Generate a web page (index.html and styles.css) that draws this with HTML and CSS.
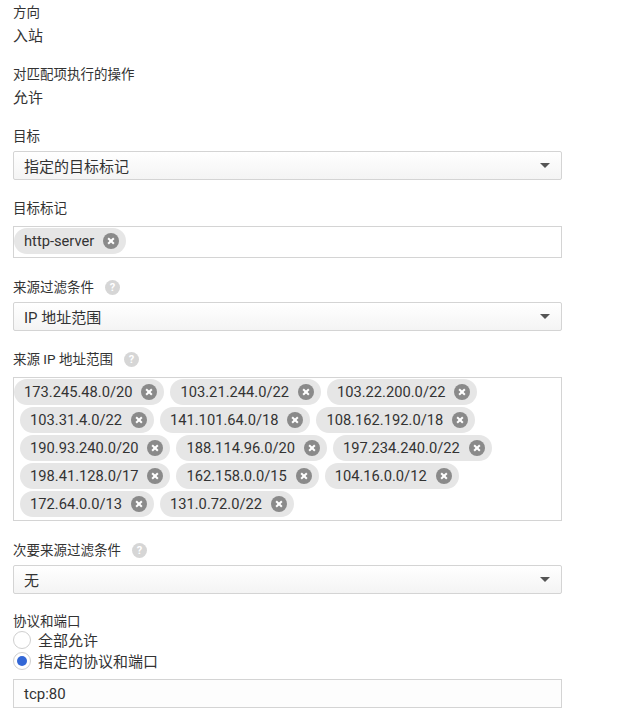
FILE: index.html
```html
<!DOCTYPE html>
<html lang="zh-CN">
<head>
    <meta charset="UTF-8">
    <title>防火墙规则</title>
    <link rel="stylesheet" href="styles.css">
</head>
<body>
    <div class="form">
        <div class="field">
            <div class="label">方向</div>
            <div class="value">入站</div>
        </div>

        <div class="field">
            <div class="label">对匹配项执行的操作</div>
            <div class="value">允许</div>
        </div>

        <div class="field select-field">
            <div class="label">目标</div>
            <div class="select">
                <span>指定的目标标记</span>
                <span class="arrow"></span>
            </div>
        </div>

        <div class="field tags-field">
            <div class="label">目标标记</div>
            <div class="chip-box">
                <span class="chip">http-server<i class="chip-x"></i></span>
            </div>
        </div>

        <div class="field select-field">
            <div class="label">来源过滤条件<span class="help">?</span></div>
            <div class="select">
                <span>IP 地址范围</span>
                <span class="arrow"></span>
            </div>
        </div>

        <div class="field tags-field">
            <div class="label">来源 IP 地址范围<span class="help">?</span></div>
            <div class="chip-box" id="ranges"></div>
        </div>

        <div class="field select-field">
            <div class="label">次要来源过滤条件<span class="help">?</span></div>
            <div class="select">
                <span>无</span>
                <span class="arrow"></span>
            </div>
        </div>

        <div class="field protocol">
            <div class="label">协议和端口</div>
            <label class="radio"><span class="dot"></span>全部允许</label>
            <label class="radio checked"><span class="dot"></span>指定的协议和端口</label>
            <div class="text-input">tcp:80</div>
        </div>
    </div>

    <script>
        // 来源 IP 地址范围
        const ranges = [
            "173.245.48.0/20", "103.21.244.0/22", "103.22.200.0/22",
            "103.31.4.0/22", "141.101.64.0/18", "108.162.192.0/18",
            "190.93.240.0/20", "188.114.96.0/20", "197.234.240.0/22",
            "198.41.128.0/17", "162.158.0.0/15", "104.16.0.0/12",
            "172.64.0.0/13", "131.0.72.0/22"
        ];

        const box = document.getElementById('ranges');
        ranges.forEach(r => {
            const chip = document.createElement('span');
            chip.className = 'chip';
            chip.textContent = r;
            const x = document.createElement('i');
            x.className = 'chip-x';
            chip.appendChild(x);
            box.appendChild(chip);
        });
    </script>
</body>
</html>
```

FILE: styles.css
```css
body {
    margin: 0;
    background: #fff;
    color: #333;
    font-family: Roboto, "Noto Sans CJK SC", sans-serif;
}

.form {
    width: 549px;
    padding: 2px 0 0 13px;
}

.field {
    margin-bottom: 16px;
}

.select-field {
    margin-bottom: 18px;
}

.tags-field {
    margin-bottom: 19px;
}

.protocol {
    margin-top: 19px;
}

.label {
    display: flex;
    align-items: center;
    font-size: 13.5px;
    line-height: 20px;
    color: #333;
}

.value {
    margin-top: 2px;
    font-size: 15px;
    line-height: 24px;
    color: #333;
}

.help {
    width: 15px;
    height: 15px;
    margin-left: 11px;
    border-radius: 50%;
    background: #d6d6d6;
    color: #fff;
    font-family: Roboto, sans-serif;
    font-size: 11px;
    font-weight: bold;
    line-height: 15px;
    text-align: center;
}

.select {
    margin-top: 5px;
    height: 29px;
    box-sizing: border-box;
    border: 1px solid #d4d4d4;
    border-radius: 2px;
    background: linear-gradient(#fff, #f4f4f4);
    display: flex;
    align-items: center;
    justify-content: space-between;
    padding: 0 11px 0 10px;
    font-size: 15px;
    color: #333;
}

.arrow {
    width: 0;
    height: 0;
    border-left: 5px solid transparent;
    border-right: 5px solid transparent;
    border-top: 5px solid #555;
}

.chip-box {
    margin-top: 8px;
    border: 1px solid #d4d4d4;
    padding: 1px 0;
    display: flex;
    flex-wrap: wrap;
}

.chip {
    display: inline-flex;
    align-items: center;
    height: 26px;
    margin: 0 0 2px 6px;
    padding: 0 7px 0 10px;
    border-radius: 13px;
    background: #e6e6e6;
    font-size: 14.7px;
    color: #333;
}

.chip:first-child {
    margin-left: 0;
}

.chip-x {
    position: relative;
    width: 16px;
    height: 16px;
    margin-left: 9px;
    border-radius: 50%;
    background: #8a8a8a;
}

.chip-x::before,
.chip-x::after {
    content: "";
    position: absolute;
    left: 4px;
    top: 7px;
    width: 8px;
    height: 2px;
    background: #fff;
    transform: rotate(45deg);
}

.chip-x::after {
    transform: rotate(-45deg);
}

.protocol .label {
    line-height: 16px;
}

.radio {
    display: flex;
    align-items: center;
    height: 21px;
    font-size: 15px;
    color: #333;
}

.dot {
    width: 18px;
    height: 18px;
    box-sizing: border-box;
    margin-right: 7px;
    border: 1px solid #cfcfcf;
    border-radius: 50%;
    background: #fff;
    display: flex;
    align-items: center;
    justify-content: center;
}

.radio.checked .dot::after {
    content: "";
    width: 10px;
    height: 10px;
    border-radius: 50%;
    background: #3367d6;
}

.text-input {
    margin-top: 8px;
    height: 29px;
    box-sizing: border-box;
    border: 1px solid #d4d4d4;
    background: #fdfdfd;
    padding: 0 10px;
    display: flex;
    align-items: center;
    font-size: 15px;
    color: #333;
}
```
